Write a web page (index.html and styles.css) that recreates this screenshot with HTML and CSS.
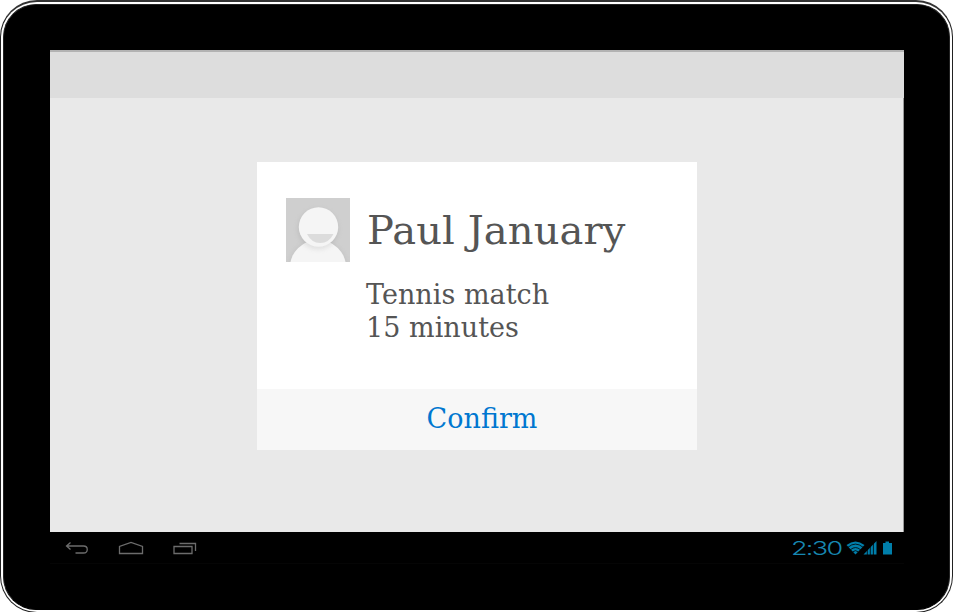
FILE: index.html
```html
<!DOCTYPE html>
<html lang="en">
<head>
<meta charset="utf-8">
<title>Confirm booking</title>
<link rel="stylesheet" href="styles.css">
</head>
<body>
<div class="device">
<div class="bezel">
  <main class="screen">
    <header class="action-bar"></header>
    <section class="content">
      <article class="card">
        <div class="details">
          <svg class="avatar" viewBox="0 0 64 64">
            <defs>
              <filter id="soft" x="-30%" y="-30%" width="160%" height="160%"><feGaussianBlur stdDeviation="2.5"/></filter>
              <clipPath id="torso"><ellipse cx="32" cy="69" rx="28.5" ry="27"/></clipPath>
            </defs>
            <rect width="64" height="64" fill="#cfcfcf"/>
            <ellipse cx="32" cy="69" rx="29" ry="27" fill="#aaa" opacity=".3" filter="url(#soft)"/>
            <circle cx="32" cy="31" r="20" fill="#999" opacity=".3" filter="url(#soft)"/>
            <ellipse cx="32" cy="69" rx="28" ry="27" fill="#f5f5f5"/>
            <g clip-path="url(#torso)"><circle cx="32" cy="31" r="20" fill="#aaa" opacity=".3" filter="url(#soft)"/></g>
            <circle cx="32.5" cy="29" r="19.7" fill="#f5f5f5"/>
            <path d="M21 36H47.500Q43 45 34.200 45Q25.500 45 21 36Z" fill="#dcdcdc"/>
          </svg>
          <div class="summary">
            <h1 class="name">Paul January</h1>
            <p class="booking">Tennis match<br>15 minutes</p>
          </div>
        </div>
        <button class="confirm" type="button">Confirm</button>
      </article>
    </section>
  </main>
  <footer class="system-bar">
    <nav class="nav">
      <svg width="24" height="14" viewBox="0 0 24 14"><path d="M5.500 1.500L1.500 5L5.500 8.500M1.500 5H18.500C23.500 5 23.500 12 18.500 12H10.500"/></svg>
      <svg width="26" height="14" viewBox="0 0 26 14"><path d="M1.500 12.500V5.500L13 1.500L24.500 5.500V12.500Z"/></svg>
      <svg width="24" height="14" viewBox="0 0 24 14"><path d="M1 5.500H19V12.500H1ZM6.500 2.500H22.500V10"/></svg>
    </nav>
    <div class="status">
      <span class="clock"><span class="clock-text">2:30</span></span>
      <svg class="signals" width="46" height="14" viewBox="0 0 46 14">
        <path d="M-.5 4Q8.500 -3 17.500 4L8.500 13.500Z"/>
        <path class="gap" d="M1 6.200Q8.500 0 16 6.200M3.500 8.700Q8.500 4.400 13.500 8.700M5.700 10.900Q8.500 8.400 11.300 10.900"/>
        <path d="M16.500 13.500L29.500 0V13.500Z"/>
        <path class="gap" d="M20.300 6V14M23.300 3V14M26.400 0V14"/>
        <path d="M36 2H38.500V.5H42V2H45V13.500H36Z"/>
      </svg>
    </div>
  </footer>
</div>
</div>
</body>
</html>
```
FILE: styles.css
```css
* { box-sizing: border-box; }
body {
  margin: 0;
  background: #fff;
  font-family: "DejaVu Serif", serif;
  overflow: hidden;
}
.device {
  width: 953px;
  height: 613px;
  border: 1px solid #222;
  border-top: 2px solid #333;
  border-radius: 37px;
  padding: 2px;
  background: #fff;
}
.bezel {
  height: 100%;
  border: 1px solid #222;
  border-bottom-color: #000;
  border-radius: 33px;
  background: #000;
  padding: 45px 45px 0 46px;
  display: flex;
  flex-direction: column;
}
.screen {
  width: 854px;
  height: 482px;
  display: flex;
  flex-direction: column;
  background: #e9e9e9;
}
.action-bar {
  height: 48px;
  border-top: 2px solid #b2b2b2;
  background: #ddd;
}
.content {
  flex: 1;
  border-right: 1px solid #999;
  padding: 64px 0 0 207px;
}
.card {
  width: 440px;
  height: 288px;
  background: #fff;
  color: #555;
  display: flex;
  flex-direction: column;
}
.details {
  flex: 1;
  display: flex;
  padding: 36px 0 0 29px;
}
.avatar { width: 64px; height: 64px; flex: none; }
.summary { padding-left: 16px; white-space: nowrap; }
.name {
  margin: 9px 0 0 1px;
  font-size: 40px;
  font-weight: 400;
  line-height: 47px;
  letter-spacing: .1px;
}
.booking {
  margin: 24px 0 0;
  font-size: 27px;
  line-height: 33px;
  letter-spacing: .03px;
}
.confirm {
  height: 61px;
  border: 0;
  padding: 0 0 2px 10px;
  background: #f7f7f7;
  color: #0077d0;
  font: 27px "DejaVu Serif", serif;
}
.system-bar {
  width: 854px;
  height: 32px;
  padding: 9px 11px 0 15px;
  display: flex;
  justify-content: space-between;
  border-bottom: 1px solid #050505;
}
.nav { display: flex; gap: 29px; height: 14px; }
.nav svg { fill: none; stroke: #6c6c6c; stroke-width: 1.3; }
.status { display: flex; gap: 3px; height: 14px; }
.clock {
  width: 51px;
  color: #1787b0;
  font: 300 19px/14px "Inter", sans-serif;
  letter-spacing: -1.2px;
}
.clock-text {
  display: inline-block;
  transform: translate(-2px, 1px) scaleX(1.42);
  transform-origin: 0 50%;
}
.signals { fill: #007eaa; overflow: visible; }
.signals .gap { fill: none; stroke: #000; stroke-width: .8; }
```
